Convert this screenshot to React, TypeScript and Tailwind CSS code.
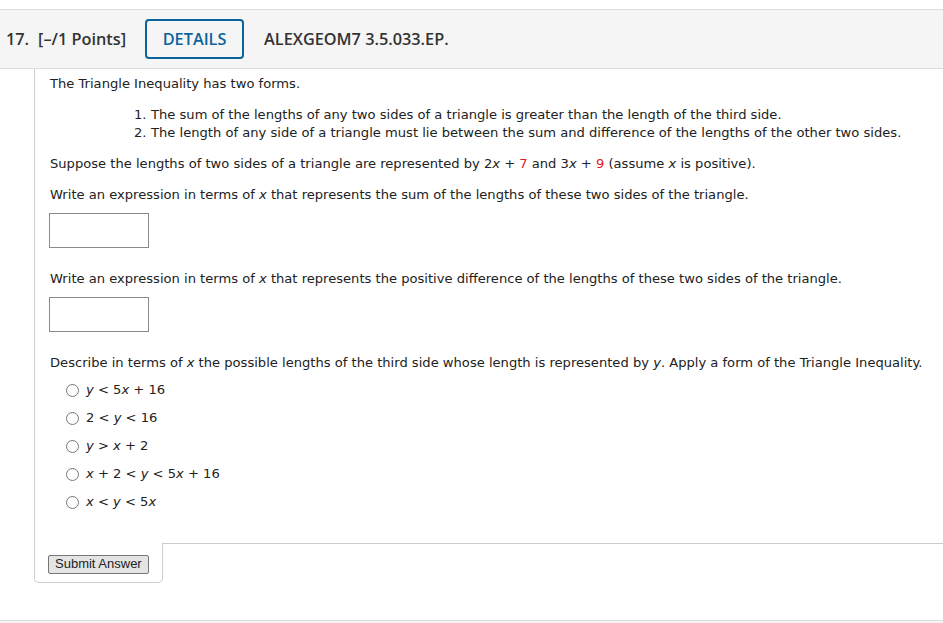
import React from "react";

const Radio = () => (
  <span className="inline-block w-[13px] h-[13px] rounded-full border border-[#777] bg-white mr-[7px] shrink-0" />
);

const X = ({ c = "x" }: { c?: string }) => <i>{c}</i>;

export default function App() {
  const options: React.ReactNode[] = [
    <><X c="y" /> &lt; 5<X /> + 16</>,
    <>2 &lt; <X c="y" /> &lt; 16</>,
    <><X c="y" /> &gt; <X /> + 2</>,
    <><X /> + 2 &lt; <X c="y" /> &lt; 5<X /> + 16</>,
    <><X /> &lt; <X c="y" /> &lt; 5<X /></>,
  ];
  return (
    <div className="w-[943px] h-[623px] bg-white overflow-hidden flex flex-col">
      <div className="h-[9px] shrink-0" />
      <div
        className="h-[60px] shrink-0 border-y border-[#dcdcdc] bg-[#f5f5f5] flex items-center text-[#333] font-semibold text-[16.3px]"
        style={{ fontFamily: '"Open Sans", sans-serif' }}
      >
        <span className="ml-[6px]">17.</span>
        <span className="ml-[9px]">[–/1 Points]</span>
        <span className="ml-[19px] w-[99px] h-[40px] border-2 border-[#0c639a] rounded-[4px] flex items-center justify-center text-[#0c639a]">
          DETAILS
        </span>
        <span className="ml-[20px]">ALEXGEOM7 3.5.033.EP.</span>
      </div>
      <div
        className="ml-[34px] flex flex-col text-[13.1px] text-[#222]"
        style={{ fontFamily: '"DejaVu Sans", Verdana, sans-serif' }}
      >
        <div className="border-l border-[#ccc] pl-[15px] pt-[6px] pb-[27px]">
          <p className="leading-[18px]">The Triangle Inequality has two forms.</p>
          <ol className="mt-[13px] ml-[84px] leading-[18px]">
            <li className="flex"><span className="w-[17px]">1.</span>The sum of the lengths of any two sides of a triangle is greater than the length of the third side.</li>
            <li className="flex"><span className="w-[17px]">2.</span>The length of any side of a triangle must lie between the sum and difference of the lengths of the other two sides.</li>
          </ol>
          <p className="mt-[13px] leading-[18px]">
            Suppose the lengths of two sides of a triangle are represented by 2<X /> + <span className="text-[#e31b1b]">7</span> and 3<X /> + <span className="text-[#e31b1b]">9</span> (assume <X /> is positive).
          </p>
          <p className="mt-[13px] leading-[18px]">
            Write an expression in terms of <X /> that represents the sum of the lengths of these two sides of the triangle.
          </p>
          <div className="mt-[9px] ml-[-1px] w-[100px] h-[35px] border border-[#8a8a8a] bg-white" />
          <p className="mt-[22px] leading-[18px]">
            Write an expression in terms of <X /> that represents the positive difference of the lengths of these two sides of the triangle.
          </p>
          <div className="mt-[9px] ml-[-1px] w-[100px] h-[35px] border border-[#8a8a8a] bg-white" />
          <p className="mt-[22px] leading-[18px]">
            Describe in terms of <X /> the possible lengths of the third side whose length is represented by <X c="y" />. Apply a form of the Triangle Inequality.
          </p>
          <div className="mt-[4px] ml-[16px] flex flex-col">
            {options.map((o, i) => (
              <div key={i} className="h-[28px] flex items-center">
                <Radio />
                <span>{o}</span>
              </div>
            ))}
          </div>
        </div>
        <div className="flex">
          <div className="w-[129px] h-[40px] border-l border-b border-r border-[#ccc] rounded-b-[5px] pl-[13px] pt-[11px]">
            <button
              className="h-[19px] px-[6px] border border-[#767676] bg-[#e4e4e4] text-[13px] leading-[16px] text-[#222] rounded-[2px]"
              style={{ fontFamily: '"Liberation Sans", Arial, sans-serif' }}
            >
              Submit Answer
            </button>
          </div>
          <div className="flex-1 border-t border-[#ccc]" />
        </div>
      </div>
      <div className="flex-1" />
      <div className="h-[3px] shrink-0 border-t border-[#ddd] bg-[#f5f5f5]" />
    </div>
  );
}
